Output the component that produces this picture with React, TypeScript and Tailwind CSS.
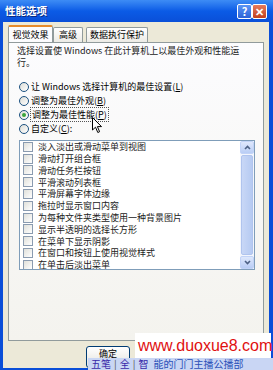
import { ReactNode } from "react";

const font = { fontFamily: '"Noto Sans CJK SC", "Liberation Sans", sans-serif' };

function Radio({ checked, children }: { checked?: boolean; children: ReactNode }) {
  return (
    <div className="flex items-center h-[14px]">
      <span className="w-[10px] h-[10px] rounded-full border border-[#1c5180] bg-gradient-to-br from-[#dcdcd6] to-white flex items-center justify-center shrink-0">
        {checked && <span className="w-[4px] h-[4px] rounded-full bg-[#3aa53a]" />}
      </span>
      <span className="ml-[2px]">{children}</span>
    </div>
  );
}

function Key({ k }: { k: string }) {
  return (
    <span>
      (<span className="underline">{k}</span>)
    </span>
  );
}

const items = [
  "淡入淡出或滑动菜单到视图",
  "滑动打开组合框",
  "滑动任务栏按钮",
  "平滑滚动列表框",
  "平滑屏幕字体边缘",
  "拖拉时显示窗口内容",
  "为每种文件夹类型使用一种背景图片",
  "显示半透明的选择长方形",
  "在菜单下显示阴影",
  "在窗口和按钮上使用视觉样式",
  "在单击后淡出菜单",
];

export default function App() {
  return (
    <div className="w-[273px] h-[370px] relative overflow-hidden bg-[#0a4ed8] flex flex-col text-[9px] text-black" style={font}>
      {/* title bar */}
      <div className="h-[22px] shrink-0 flex items-center pl-[5px] pr-[6px] bg-gradient-to-b from-[#3d8cf5] via-[#0b5be6] to-[#0a4fd8]">
        <span className="text-white font-bold text-[10.5px] [text-shadow:1px_1px_0_#0a2a80]">性能选项</span>
        <div className="ml-auto flex">
          <span className="w-[15px] h-[15px] rounded-[2px] border border-white bg-gradient-to-b from-[#5b95f5] to-[#2d63d8] text-white text-[11px] font-bold leading-[13px] text-center">?</span>
          <span className="w-[15px] h-[15px] rounded-[2px] border border-white bg-gradient-to-b from-[#e77a5c] to-[#c3401c] text-white text-[11px] font-bold leading-[13px] text-center">✕</span>
        </div>
      </div>

      {/* body */}
      <div className="flex-1 ml-[3px] mr-[4px] mb-[3px] bg-[#ece9d8] pt-[3px] pl-[5px] pr-[5px] flex flex-col">
        {/* tabs */}
        <div className="flex items-end h-[17px] relative z-10">
          <div className="h-[17px] w-[45px] bg-[#fcfcfe] border border-b-0 border-[#919b9c] border-t-[#e68b2c] border-t-2 rounded-t-[2px] flex items-center justify-center">
            视觉效果
          </div>
          <div className="h-[15px] w-[30px] bg-gradient-to-b from-white to-[#ecebe6] border border-b-0 border-[#919b9c] rounded-t-[2px] flex items-center justify-center">
            高级
          </div>
          <div className="h-[15px] w-[62px] ml-[3px] bg-gradient-to-b from-white to-[#ecebe6] border border-b-0 border-[#919b9c] rounded-t-[2px] flex items-center justify-center">
            数据执行保护
          </div>
        </div>

        {/* panel */}
        <div className="h-[299px] border border-[#919b9c] bg-gradient-to-b from-[#fcfcfe] to-[#f4f3ee] pl-[8px] pr-[6px] pt-[2px] relative">
          <p className="leading-[12px] text-[#222]">
            选择设置使 Windows 在此计算机上以最佳外观和性能运
            <br />
            行。
          </p>

          <div className="mt-[11px] flex flex-col ml-[2px]">
            <Radio>让 Windows 选择计算机的最佳设置<Key k="L" /></Radio>
            <Radio>调整为最佳外观<Key k="B" /></Radio>
            <Radio checked>
              <span className="outline outline-1 outline-dotted outline-[#555] px-[1px]">调整为最佳性能<Key k="P" /></span>
            </Radio>
            <Radio>自定义<Key k="C" />:</Radio>
          </div>

          {/* list */}
          <div className="mt-[4px] ml-[2px] w-[236px] h-[130px] border border-[#7f9db9] bg-white flex overflow-hidden">
            <div className="flex-1 pl-[3px]">
              {items.map((t) => (
                <div key={t} className="h-[11.8px] flex items-center whitespace-nowrap">
                  <span className="w-[10px] h-[10px] border border-[#8a9bb0] bg-gradient-to-br from-[#e0e0da] to-white shrink-0" />
                  <span className="ml-[5px] text-[#222]">{t}</span>
                </div>
              ))}
            </div>
            <div className="w-[14px] bg-[#f3f6fd] flex flex-col">
              <div className="h-[13px] bg-gradient-to-b from-[#dfe8fc] to-[#b9cdf5] border border-[#c2d3f7] rounded-[2px] flex items-center justify-center">
                <svg width="7" height="5" viewBox="0 0 7 5"><path d="M1 4 L3.5 1.5 L6 4" stroke="#4d6185" strokeWidth="1.6" fill="none" /></svg>
              </div>
              <div className="flex-1 m-[1px] bg-gradient-to-r from-[#c8d7f6] to-[#b6caf2] border border-[#b0c4ee] rounded-[2px]" />
              <div className="h-[13px] bg-gradient-to-b from-[#dfe8fc] to-[#b9cdf5] border border-[#c2d3f7] rounded-[2px] flex items-center justify-center">
                <svg width="7" height="5" viewBox="0 0 7 5"><path d="M1 1 L3.5 3.5 L6 1" stroke="#4d6185" strokeWidth="1.6" fill="none" /></svg>
              </div>
            </div>
          </div>

          {/* mouse cursor */}
          <svg className="absolute left-[83px] top-[74px]" width="11" height="17" viewBox="0 0 11 17">
            <path d="M0.5 0.5 L0.5 13 L3.5 10.2 L5.8 15.5 L7.6 14.7 L5.4 9.6 L9.5 9.6 Z" fill="white" stroke="black" strokeWidth="1" />
          </svg>
        </div>

        {/* buttons */}
        <div className="flex pl-[78px] pt-[5px]">
          <div className="w-[44px] h-[22px] rounded-[3px] border border-[#003c74] bg-gradient-to-b from-white to-[#e3e2dc] flex items-start justify-center pt-[3px]">
            <span className="leading-[8px]">确定</span>
          </div>
        </div>
      </div>

      {/* watermark */}
      <div className="absolute left-[135px] top-[333px] w-[136px] h-[25px] bg-white flex items-center pl-[3px]">
        <span className="text-[#e01010] text-[16px] leading-[20px]" style={{ fontFamily: '"Liberation Sans", sans-serif' }}>www.duoxue8.com</span>
      </div>

      {/* ime bar */}
      <div className="absolute left-[88px] top-[358px] right-0 h-[12px] bg-[#c9d6f4] flex items-center text-[10px] leading-[12px] text-[#3a28a8] gap-[3px] pl-[3px]">
        <span>五笔</span>
        <span className="text-[#555]">|</span>
        <span>全</span>
        <span className="text-[#555]">|</span>
        <span>智</span>
        <span className="ml-[2px] text-[#2a4fb8]">能的门门主播公播部</span>
      </div>
    </div>
  );
}
